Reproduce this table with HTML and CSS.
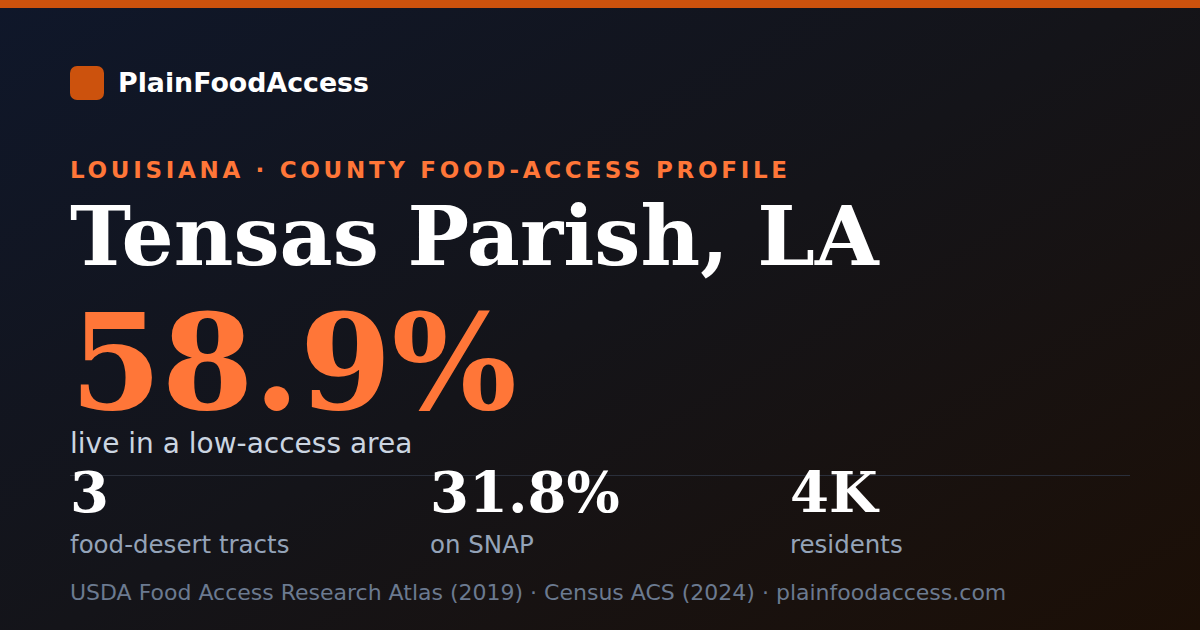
FILE: index.html
```html
<!DOCTYPE html>
<html lang="en">
<head>
<meta charset="utf-8">
<title>Tensas Parish, LA — PlainFoodAccess</title>
<link rel="stylesheet" href="styles.css">
</head>
<body>
<div class="card">
  <div class="bar"></div>
  <main class="content">
    <div class="brand">
      <span class="logo"></span>
      <span class="brand-name">PlainFoodAccess</span>
    </div>
    <div class="eyebrow">LOUISIANA · COUNTY FOOD-ACCESS PROFILE</div>
    <h1 class="title">Tensas Parish, LA</h1>
    <div class="hero">58.9%</div>
    <div class="hero-label">live in a low-access area</div>
    <div class="stats">
      <div class="stat">
        <div class="stat-num">3</div>
        <div class="stat-label">food-desert tracts</div>
      </div>
      <div class="stat">
        <div class="stat-num">31.8%</div>
        <div class="stat-label">on SNAP</div>
      </div>
      <div class="stat">
        <div class="stat-num">4K</div>
        <div class="stat-label">residents</div>
      </div>
    </div>
    <div class="source">USDA Food Access Research Atlas (2019) · Census ACS (2024) · plainfoodaccess.com</div>
  </main>
</div>
</body>
</html>
```
FILE: styles.css
```css
html, body {
  margin: 0;
  padding: 0;
}
body {
  width: 1200px;
  height: 630px;
  overflow: hidden;
  font-family: "DejaVu Sans", "Liberation Sans", sans-serif;
}
.card {
  width: 1200px;
  height: 630px;
  background: linear-gradient(150deg, #0f172a 0%, #141419 50%, #1c0f06 100%);
  display: flex;
  flex-direction: column;
}
.bar {
  height: 8px;
  background: #cc520d;
  flex: none;
}
.content {
  padding: 0 70px;
  display: flex;
  flex-direction: column;
}
.brand {
  margin-top: 58px;
  display: flex;
  align-items: center;
  gap: 14px;
  height: 34px;
}
.logo {
  width: 34px;
  height: 34px;
  border-radius: 7px;
  background: #cc520d;
  flex: none;
}
.brand-name {
  font-size: 26.8px;
  line-height: 34px;
  font-weight: bold;
  color: #ffffff;
}
.eyebrow {
  margin-top: 59px;
  font-size: 23px;
  line-height: 23px;
  font-weight: bold;
  letter-spacing: 3.7px;
  color: #ff7638;
}
.title {
  margin: 13px 0 0;
  font-family: "DejaVu Serif", "Liberation Serif", serif;
  font-size: 82px;
  line-height: 82px;
  font-weight: bold;
  color: #ffffff;
}
.hero {
  margin-top: 26px;
  font-family: "DejaVu Serif", "Liberation Serif", serif;
  font-size: 132px;
  line-height: 120px;
  font-weight: bold;
  color: #ff7638;
}
.hero-label {
  margin-top: 7px;
  font-size: 28px;
  line-height: 28px;
  color: #cbd5e1;
}
.stats {
  margin-top: 17px;
  border-top: 1px solid #2a2f3b;
  display: flex;
}
.stat {
  width: 360px;
  flex: none;
}
.stat-num {
  margin-top: -12px;
  font-family: "DejaVu Serif", "Liberation Serif", serif;
  font-size: 56px;
  line-height: 56px;
  font-weight: bold;
  color: #ffffff;
}
.stat-label {
  margin-top: 13px;
  font-size: 24.5px;
  line-height: 24.5px;
  color: #94a3b8;
}
.source {
  margin-top: 24px;
  font-size: 22px;
  line-height: 22px;
  color: #6b7a90;
}
```
